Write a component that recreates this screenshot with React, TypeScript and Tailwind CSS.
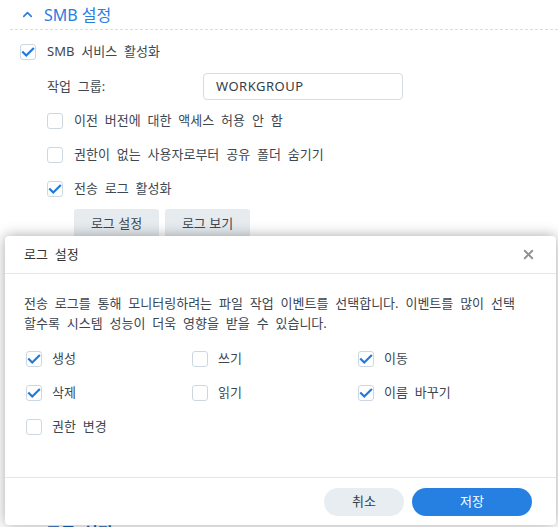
import { ChevronUp, X } from 'lucide-react';

function Check({ checked }: { checked?: boolean }) {
  return (
    <span className="flex h-4 w-4 shrink-0 items-center justify-center rounded-[3px] border border-[#cdd7e1] bg-white">
      {checked && (
        <svg viewBox="0 0 16 16" className="h-[14px] w-[14px]">
          <path d="M2.3 8.2l3.7 3.7L13.8 4.2" fill="none" stroke="#1f7ae0" strokeWidth="2.5" strokeLinecap="square" />
        </svg>
      )}
    </span>
  );
}

function CheckRow({ label, checked, indent }: { label: string; checked?: boolean; indent?: boolean }) {
  return (
    <div className={`flex h-[34px] items-center gap-[11px] ${indent ? 'pl-[47px]' : 'pl-[20px]'}`}>
      <Check checked={checked} />
      <span>{label}</span>
    </div>
  );
}

const events = [
  { label: '생성', checked: true },
  { label: '쓰기', checked: false },
  { label: '이동', checked: true },
  { label: '삭제', checked: true },
  { label: '읽기', checked: false },
  { label: '이름 바꾸기', checked: true },
  { label: '권한 변경', checked: false },
];

export default function App() {
  return (
    <div className="relative h-[527px] w-[558px] overflow-hidden bg-white font-['Noto_Sans','Noto_Sans_CJK_KR',sans-serif] text-[13px] text-[#3d4751] [word-spacing:3.5px]">
      {/* SMB settings page behind the dialog */}
      <div className="flex h-[29px] items-center gap-[9px] pl-[20px] text-[16px] text-[#2a7de1] [word-spacing:0px]">
        <ChevronUp className="h-[15px] w-[15px]" strokeWidth={2.6} />
        <span>SMB 설정</span>
      </div>
      <div className="ml-[10px] border-t border-dashed border-[#d9dde2]" />
      <div className="pt-[5px]">
        <CheckRow label="SMB 서비스 활성화" checked />
        <div className="flex h-[35px] items-center pl-[47px]">
          <span className="w-[156px]">작업 그룹:</span>
          <div className="flex h-[27px] w-[200px] items-center rounded-[4px] border border-[#d3dde7] px-[12px] tracking-[0.5px] text-[#333d47]">
            WORKGROUP
          </div>
        </div>
        <CheckRow label="이전 버전에 대한 액세스 허용 안 함" indent />
        <CheckRow label="권한이 없는 사용자로부터 공유 폴더 숨기기" indent />
        <CheckRow label="전송 로그 활성화" checked indent />
        <div className="flex gap-[6px] pl-[74px] pt-[3px]">
          <button className="h-[30px] w-[85px] rounded-[3px] bg-[#e6ebf0] text-[#3d4751]">로그 설정</button>
          <button className="h-[30px] w-[85px] rounded-[3px] bg-[#e6ebf0] text-[#3d4751]">로그 보기</button>
        </div>
        <div className="pl-[46px] pt-[282px] text-[16px] font-semibold text-[#1a5fb8]">고급 설정</div>
      </div>

      {/* Log settings dialog */}
      <div className="absolute left-[5px] top-[236px] flex h-[289px] w-[551px] flex-col rounded-[4px] bg-white shadow-[0_0_14px_rgba(0,0,0,0.35)]">
        <div className="flex h-[38px] items-center justify-between border-b border-[#e2e8ee] pl-[19px] pr-[20px] text-[#333]">
          <span>로그 설정</span>
          <X className="h-[15px] w-[15px] text-[#8c9197]" strokeWidth={3} />
        </div>
        <div className="flex-1 px-[19px] pt-[19px]">
          <p className="whitespace-nowrap leading-[20px] text-[#3b4550]">
            전송 로그를 통해 모니터링하려는 파일 작업 이벤트를 선택합니다. 이벤트를 많이 선택
            <br />
            할수록 시스템 성능이 더욱 영향을 받을 수 있습니다.
          </p>
          <div className="mt-[9px] grid grid-cols-[166px_166px_1fr]">
            {events.map((e) => (
              <div key={e.label} className="flex h-[34px] items-center gap-[10px] pl-[2px]">
                <Check checked={e.checked} />
                <span>{e.label}</span>
              </div>
            ))}
          </div>
        </div>
        <div className="flex h-[48px] items-center justify-end gap-[8px] border-t border-[#e2e8ee] pr-[24px]">
          <button className="h-[28px] w-[80px] rounded-full bg-[#e8edf2] text-[#333d47]">취소</button>
          <button className="h-[28px] w-[120px] rounded-full bg-[#2580e2] text-white">저장</button>
        </div>
      </div>
    </div>
  );
}
